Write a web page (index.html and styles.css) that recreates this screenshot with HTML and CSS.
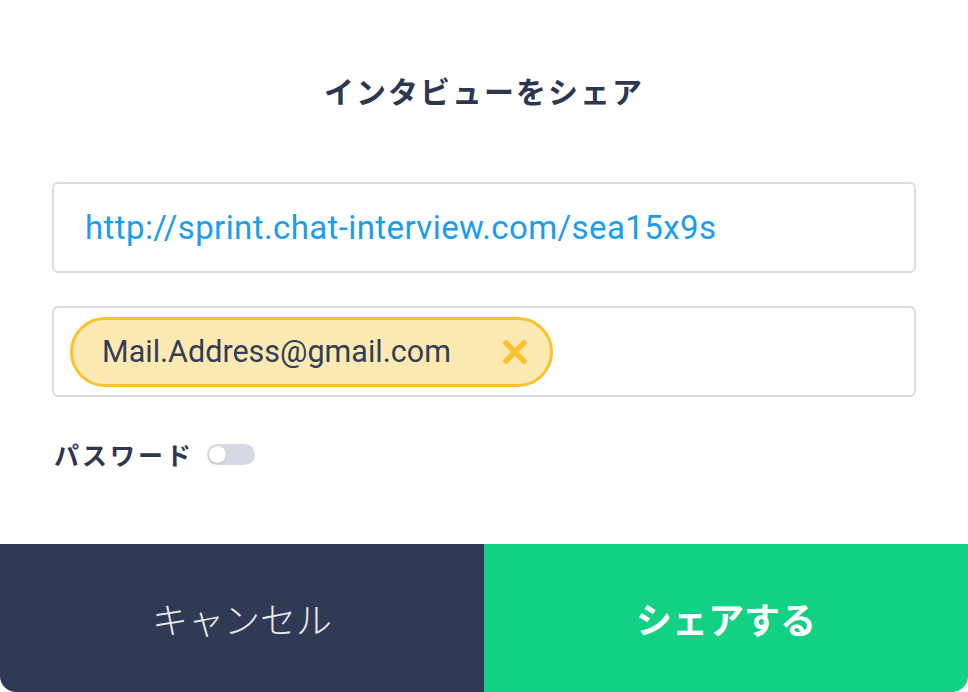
FILE: index.html
```html
<!DOCTYPE html>
<html lang="ja">
    <head>
        <meta charset="UTF-8">
        <meta name="viewport" content="width=device-width, initial-scale=1.0">
        <title>インタビューをシェア</title>
        <link rel="stylesheet" href="styles.css">
    </head>
    <body>
        <div class="modal">
            <div class="content">
                <h1 class="title">インタビューをシェア</h1>

                <div class="field url-field">
                    http://sprint.chat-interview.com/sea15x9s
                </div>

                <div class="field mail-field">
                    <span class="chip">
                        <span class="chip-text">Mail.Address@gmail.com</span>
                        <svg class="chip-close" width="26" height="26" viewBox="0 0 26 26">
                            <path d="M4 4 L22 22 M22 4 L4 22" stroke="#fbc12e" stroke-width="5.5" stroke-linecap="round" fill="none"/>
                        </svg>
                    </span>
                </div>

                <div class="password-row">
                    <span class="password-label">パスワード</span>
                    <span class="toggle"><span class="knob"></span></span>
                </div>
            </div>

            <div class="actions">
                <button class="button cancel-btn">キャンセル</button>
                <button class="button share-btn">シェアする</button>
            </div>
        </div>
    </body>
</html>
```

FILE: styles.css
```css
body {
    margin: 0;
    background-color: #ffffff;
    font-family: Roboto, "Noto Sans CJK JP", sans-serif;
    color: #2e3750;
}
.modal {
    height: 692px;
    display: flex;
    flex-direction: column;
}
.content {
    flex: 1;
    padding: 0 52px;
}
.title {
    margin: 70px 0 0;
    font-family: "Noto Sans CJK JP", sans-serif;
    font-size: 30px;
    line-height: 40px;
    font-weight: bold;
    letter-spacing: 2px;
    text-align: center;
    color: #2e3750;
}
.field {
    height: 87px;
    border: 2px solid #d9dce3;
    border-radius: 6px;
    display: flex;
    align-items: center;
}
.url-field {
    margin-top: 72px;
    padding-left: 31px;
    font-size: 33px;
    letter-spacing: 0.4px;
    color: #1a9df0;
}
.mail-field {
    margin-top: 33px;
    padding-left: 16px;
}
.chip {
    height: 64px;
    box-sizing: content-box;
    border: 3px solid #fbc12e;
    border-radius: 36px;
    background-color: #fdeab3;
    display: flex;
    align-items: center;
    padding: 0 22px 0 29px;
}
.chip-text {
    font-size: 30.5px;
    color: #333d55;
}
.chip-close {
    margin-left: 51px;
}
.password-row {
    margin-top: 45px;
    display: flex;
    align-items: center;
    height: 24px;
}
.password-label {
    font-family: "Noto Sans CJK JP", sans-serif;
    font-size: 25px;
    font-weight: bold;
    letter-spacing: 3px;
    color: #2e3750;
    margin-left: 2px;
}
.toggle {
    margin-left: 13px;
    width: 48px;
    height: 21px;
    border-radius: 11px;
    background-color: #d6d9e3;
    display: flex;
    align-items: center;
    padding-left: 2px;
    box-sizing: border-box;
}
.knob {
    width: 17px;
    height: 17px;
    border-radius: 50%;
    background-color: #ffffff;
    box-shadow: 0 1px 2px rgba(0, 0, 0, 0.15);
}
.actions {
    height: 148px;
    display: grid;
    grid-template-columns: 484px 1fr;
    border-radius: 0 0 16px 16px;
    overflow: hidden;
}
.button {
    border: none;
    margin: 0;
    padding: 0;
    font-family: "Noto Sans CJK JP", sans-serif;
    font-size: 36px;
    color: #ffffff;
    cursor: pointer;
}
.cancel-btn {
    background-color: #313a54;
    font-weight: 300;
    color: #e9ebf0;
}
.share-btn {
    background-color: #12d184;
    font-weight: bold;
}
```
